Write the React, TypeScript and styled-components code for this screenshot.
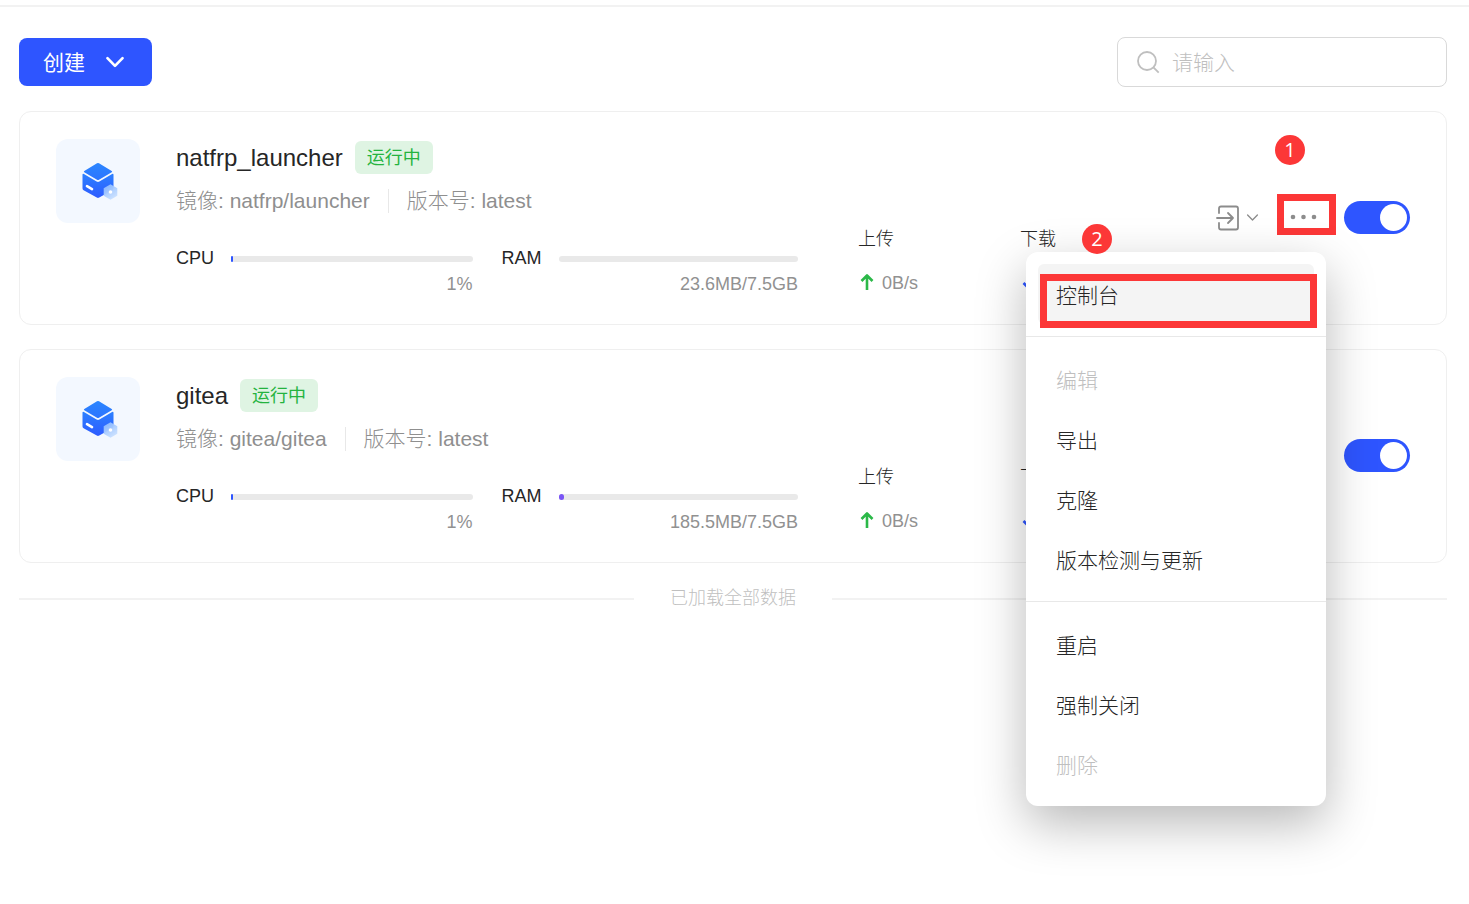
import React from "react";
import styled, { createGlobalStyle } from "styled-components";

const latin = `"Liberation Sans", Arial, "Noto Sans CJK SC", sans-serif`;

const GlobalStyle = createGlobalStyle`
  *, *::before, *::after { box-sizing: border-box; }
  body {
    margin: 0;
    background: #fff;
    color: #262626;
    font-family: ${latin};
    font-size: 18px;
    font-weight: 300;
    line-height: 24px;
  }
  button, input { font: inherit; color: inherit; }
  button { cursor: pointer; border: 0; padding: 0; background: none; }
  svg { display: block; flex: none; }
`;

const Page = styled.div`
  min-height: 100vh;
  padding-top: 5px;
`;

const Content = styled.main`
  border-top: 2px solid #f2f2f2;
  padding: 30px 22px 40px 19px;
`;

const Toolbar = styled.header`
  display: flex;
  align-items: center;
  justify-content: space-between;
  margin-bottom: 24px;
`;

const CreateButton = styled.button`
  display: flex;
  align-items: center;
  gap: 20px;
  height: 48px;
  padding: 0 27px 0 24px;
  border-radius: 8px;
  background: #2e55ff;
  color: #fff;
  font-size: 21px;
  font-weight: 400;
`;

const ButtonText = styled.span`
  padding-top: 2px;
`;

const SearchBox = styled.label`
  display: flex;
  align-items: center;
  gap: 12px;
  width: 330px;
  height: 50px;
  padding: 0 18px;
  border: 1px solid #d9d9d9;
  border-radius: 8px;
`;

const SearchInput = styled.input`
  flex: 1;
  min-width: 0;
  padding: 2px 0 0;
  border: 0;
  outline: 0;
  background: none;
  font-size: 21px;
  line-height: 30px;
  &::placeholder { color: #bfbfbf; opacity: 1; }
`;

const CardList = styled.section`
  display: flex;
  flex-direction: column;
  gap: 24px;
`;

const Card = styled.article`
  display: flex;
  padding: 27px 36px 28px;
  border: 1px solid #efefef;
  border-radius: 12px;
`;

const IconTile = styled.div`
  display: flex;
  align-items: center;
  justify-content: center;
  flex: none;
  width: 84px;
  height: 84px;
  margin-right: 36px;
  padding-left: 4px;
  border-radius: 12px;
  background: #f3f8ff;
`;

const Info = styled.div`
  flex: 1;
  min-width: 0;
  margin-right: 60px;
`;

const TitleRow = styled.div`
  display: flex;
  align-items: center;
  gap: 12px;
  height: 37px;
`;

const Name = styled.h2`
  margin: 0;
  font-size: 24px;
  font-weight: 300;
  line-height: 36px;
`;

const Status = styled.span`
  padding: 2px 12px 0;
  border-radius: 6px;
  background: #dff4e3;
  color: #24b33f;
  font-weight: 400;
  line-height: 31px;
`;

const MetaRow = styled.div`
  display: flex;
  align-items: center;
  margin-top: 10px;
  color: #8f8f8f;
  font-size: 21px;
  line-height: 30px;
  white-space: nowrap;
`;

const MetaRule = styled.span`
  width: 1px;
  height: 24px;
  margin: 0 18px;
  background: #e8e8e8;
`;

const Metrics = styled.div`
  display: grid;
  grid-template-columns: 1fr 1fr;
  gap: 29px;
  margin-top: 30px;
`;

const MetricLine = styled.div`
  display: flex;
  align-items: center;
  gap: 17px;
`;

const Track = styled.div`
  flex: 1;
  height: 6px;
  margin-top: 2px;
  border-radius: 3px;
  background: #e9e9e9;
`;

const Fill = styled.div<{ $color: string }>`
  height: 6px;
  border-radius: 3px;
  background: ${(p) => p.$color};
`;

const MetricValue = styled.div`
  margin-top: 2px;
  color: #919191;
  text-align: right;
`;

const Traffic = styled.dl`
  display: grid;
  grid-template-columns: 1fr 1fr;
  flex: none;
  align-self: flex-end;
  width: 324px;
  margin: 0 0 1px;
`;

const TrafficLabel = styled.dt`
  margin-bottom: 20px;
`;

const TrafficValue = styled.dd`
  display: flex;
  align-items: center;
  gap: 6px;
  margin: 0;
  color: #919191;
`;

const Actions = styled.div`
  display: flex;
  align-items: center;
  justify-content: flex-end;
  flex: none;
  width: 228px;
`;

const OpenButton = styled.button`
  display: flex;
  align-items: center;
  gap: 6px;
  margin-right: 25px;
`;

const MoreAnchor = styled.div`
  position: relative;
  margin-right: 20px;
`;

const MoreButton = styled.button`
  display: flex;
  align-items: center;
  justify-content: center;
  width: 40px;
  height: 40px;
`;

const Switch = styled.input`
  appearance: none;
  flex: none;
  width: 66px;
  height: 33px;
  margin: 0;
  padding: 3px;
  border-radius: 17px;
  background: #c4c4c4;
  cursor: pointer;
  &::before {
    content: "";
    display: block;
    width: 27px;
    height: 27px;
    border-radius: 50%;
    background: #fff;
  }
  &:checked { background: #2e55ff; }
  &:checked::before { margin-left: 33px; }
`;

const Menu = styled.div`
  position: absolute;
  z-index: 10;
  top: calc(100% + 14px);
  right: -2px;
  width: 300px;
  border-radius: 12px;
  background: #fff;
  box-shadow: 0 18px 50px rgba(0, 0, 0, 0.28);
`;

const MenuGroup = styled.div`
  padding: 12px;
  & + & { border-top: 1px solid #e8e8e8; }
`;

const MenuItem = styled.button<{ $active?: boolean }>`
  position: relative;
  display: block;
  width: 100%;
  height: 60px;
  padding: 4px 18px 0;
  border-radius: 6px;
  background: ${(p) => (p.$active ? "#f4f4f4" : "none")};
  font-size: 21px;
  text-align: left;
  &:disabled { color: #bfbfbf; cursor: default; }
`;

const Outline = styled.span<{ $x: number; $y: number; $w: number; $h: number }>`
  position: absolute;
  left: ${(p) => p.$x}px;
  top: ${(p) => p.$y}px;
  width: ${(p) => p.$w}px;
  height: ${(p) => p.$h}px;
  border: 7px solid #fc3737;
  pointer-events: none;
`;

const StepMark = styled.span<{ $x: number; $y: number }>`
  position: absolute;
  left: ${(p) => p.$x}px;
  top: ${(p) => p.$y}px;
  width: 30px;
  height: 30px;
  border-radius: 50%;
  background: #fc3737;
  color: #fff;
  font-family: "Open Sans", "Noto Sans", sans-serif;
  font-size: 20px;
  font-weight: 400;
  line-height: 29px;
  text-align: center;
`;

const ListEnd = styled.div`
  display: flex;
  align-items: center;
  gap: 36px;
  margin-top: 23px;
  color: #bfbfbf;
  &::before, &::after {
    content: "";
    flex: 1;
    height: 2px;
    margin-top: 2px;
    background: #f2f2f2;
  }
`;

const ChevronIcon = ({ size, width, color }: { size: number; width: number; color: string }) => (
  <svg width={size} height={size} viewBox="0 0 18 18" fill="none" stroke={color} strokeWidth={width} strokeLinecap="round" strokeLinejoin="round" aria-hidden="true">
    <path d="M2.200 5.500l6.800 7 6.800-7" />
  </svg>
);

const SearchIcon = () => (
  <svg width="24" height="24" viewBox="0 0 24 24" fill="none" stroke="#bfbfbf" strokeWidth="1.800" aria-hidden="true">
    <circle cx="11" cy="11" r="9" />
    <path d="M17.400 17.400l5.300 5.300" />
  </svg>
);

const ContainerIcon = ({ id }: { id: string }) => (
  <svg width="36" height="38" viewBox="0 0 36 38" aria-hidden="true">
    <defs>
      <linearGradient id={`${id}-box`} x1="0.5" y1="0" x2="0.5" y2="1">
        <stop offset="0" stopColor="#2c80ff" />
        <stop offset="1" stopColor="#2d5bff" />
      </linearGradient>
      <linearGradient id={`${id}-top`} x1="0.5" y1="0" x2="0.5" y2="1">
        <stop offset="0" stopColor="#2b86ff" />
        <stop offset="1" stopColor="#2c74ff" />
      </linearGradient>
      <linearGradient id={`${id}-hex`} x1="0" y1="0" x2="0.6" y2="1">
        <stop offset="0" stopColor="#86b6ff" />
        <stop offset="1" stopColor="#c9e0ff" />
      </linearGradient>
    </defs>
    <path fill={`url(#${id}-top)`} d="M15 1.300q1-.6 2 0l12.700 7.600q1 .7 0 1.300L17 17.800q-1 .6-2 0L2.300 10.200q-1-.6 0-1.300z" />
    <path fill={`url(#${id}-box)`} d="M.5 12.800q0-1.500 1.400-.8l12.700 7.600q1.400.8 2.800 0L30.100 12q1.400-.7 1.400.8v13.400q0 1.300-1.100 2L17.200 35.600q-1.200.7-2.400 0L1.600 28.200q-1.100-.7-1.100-2z" />
    <path d="M5 24.200l5 2.900" stroke="#fff" strokeWidth="2.600" strokeLinecap="round" />
    <path fill={`url(#${id}-hex)`} fillOpacity="0.950" d="M28.500 22.300l6.800 3.900v7.600l-6.800 3.900-6.800-3.900v-7.600z" />
    <circle cx="28.500" cy="30" r="1.800" fill="#fff" />
  </svg>
);

const ArrowIcon = ({ down, color }: { down?: boolean; color: string }) => (
  <svg width="18" height="18" viewBox="0 0 18 18" fill="none" stroke={color} strokeWidth="2.600" strokeLinejoin="round" aria-hidden="true">
    <path d={down ? "M9 .5v14M3.500 9L9 14.500 14.500 9" : "M9 16V2M3.500 7L9 1.500 14.500 7"} />
  </svg>
);

const EnterIcon = () => (
  <svg width="24" height="26" viewBox="0 0 24 26" fill="none" stroke="#8c8c8c" strokeWidth="1.800" strokeLinecap="round" strokeLinejoin="round" aria-hidden="true">
    <path d="M3 8V3.500q0-2 2-2h15q2 0 2 2v19q0 2-2 2H5q-2 0-2-2V18" />
    <path d="M1 13h16M12 8l5 5-5 5" />
  </svg>
);

const MoreIcon = () => (
  <svg width="28" height="8" viewBox="0 0 28 8" fill="#8c8c8c" aria-hidden="true">
    <circle cx="3" cy="3" r="2.300" />
    <circle cx="13.500" cy="3" r="2.300" />
    <circle cx="24" cy="3" r="2.300" />
  </svg>
);

interface Container {
  name: string;
  image: string;
  cpu: number;
  ram: number;
  ramText: string;
  menuOpen?: boolean;
}

const containers: Container[] = [
  { name: "natfrp_launcher", image: "natfrp/launcher", cpu: 1, ram: 0, ramText: "23.6MB/7.5GB", menuOpen: true },
  { name: "gitea", image: "gitea/gitea", cpu: 1, ram: 2.4, ramText: "185.5MB/7.5GB" },
];

const Metric = ({ label, percent, text, color }: { label: string; percent: number; text: string; color: string }) => (
  <div>
    <MetricLine>
      {label}
      <Track role="progressbar" aria-label={label} aria-valuenow={percent}>
        <Fill $color={color} style={{ width: `${percent}%` }} />
      </Track>
    </MetricLine>
    <MetricValue>{text}</MetricValue>
  </div>
);

const ActionMenu = () => (
  <Menu role="menu">
    <MenuGroup>
      <MenuItem role="menuitem" $active>
        控制台
        <Outline $x={2} $y={10} $w={277} $h={54} />
      </MenuItem>
    </MenuGroup>
    <MenuGroup>
      <MenuItem role="menuitem" disabled>编辑</MenuItem>
      <MenuItem role="menuitem">导出</MenuItem>
      <MenuItem role="menuitem">克隆</MenuItem>
      <MenuItem role="menuitem">版本检测与更新</MenuItem>
    </MenuGroup>
    <MenuGroup>
      <MenuItem role="menuitem">重启</MenuItem>
      <MenuItem role="menuitem">强制关闭</MenuItem>
      <MenuItem role="menuitem" disabled>删除</MenuItem>
    </MenuGroup>
    <StepMark $x={56} $y={-28}>2</StepMark>
  </Menu>
);

const ContainerCard = ({ item }: { item: Container }) => (
  <Card>
    <IconTile>
      <ContainerIcon id={item.name} />
    </IconTile>
    <Info>
      <TitleRow>
        <Name>{item.name}</Name>
        <Status>运行中</Status>
      </TitleRow>
      <MetaRow>
        <span>镜像: {item.image}</span>
        <MetaRule />
        <span>版本号: latest</span>
      </MetaRow>
      <Metrics>
        <Metric label="CPU" percent={item.cpu} text={`${item.cpu}%`} color="#2e55ff" />
        <Metric label="RAM" percent={item.ram} text={item.ramText} color="#7a55f5" />
      </Metrics>
    </Info>
    <Traffic>
      <div>
        <TrafficLabel>上传</TrafficLabel>
        <TrafficValue><ArrowIcon color="#2bb848" />0B/s</TrafficValue>
      </div>
      <div>
        <TrafficLabel>下载</TrafficLabel>
        <TrafficValue><ArrowIcon down color="#2e55ff" />0B/s</TrafficValue>
      </div>
    </Traffic>
    <Actions>
      <OpenButton aria-label="打开">
        <EnterIcon />
        <ChevronIcon size={13} width={1.8} color="#8c8c8c" />
      </OpenButton>
      <MoreAnchor>
        <MoreButton aria-label="更多"><MoreIcon /></MoreButton>
        {item.menuOpen && (
          <>
            <Outline $x={-7} $y={-4} $w={59} $h={41} />
            <StepMark $x={-9} $y={-63}>1</StepMark>
            <ActionMenu />
          </>
        )}
      </MoreAnchor>
      <Switch type="checkbox" role="switch" aria-label={item.name} defaultChecked />
    </Actions>
  </Card>
);

export default function App() {
  return (
    <Page>
      <GlobalStyle />
      <Content>
        <Toolbar>
          <CreateButton>
            <ButtonText>创建</ButtonText>
            <ChevronIcon size={20} width={2.4} color="#fff" />
          </CreateButton>
          <SearchBox>
            <SearchIcon />
            <SearchInput type="text" aria-label="搜索" placeholder="请输入" />
          </SearchBox>
        </Toolbar>
        <CardList>
          {containers.map((item) => (
            <ContainerCard key={item.name} item={item} />
          ))}
        </CardList>
        <ListEnd>已加载全部数据</ListEnd>
      </Content>
    </Page>
  );
}
